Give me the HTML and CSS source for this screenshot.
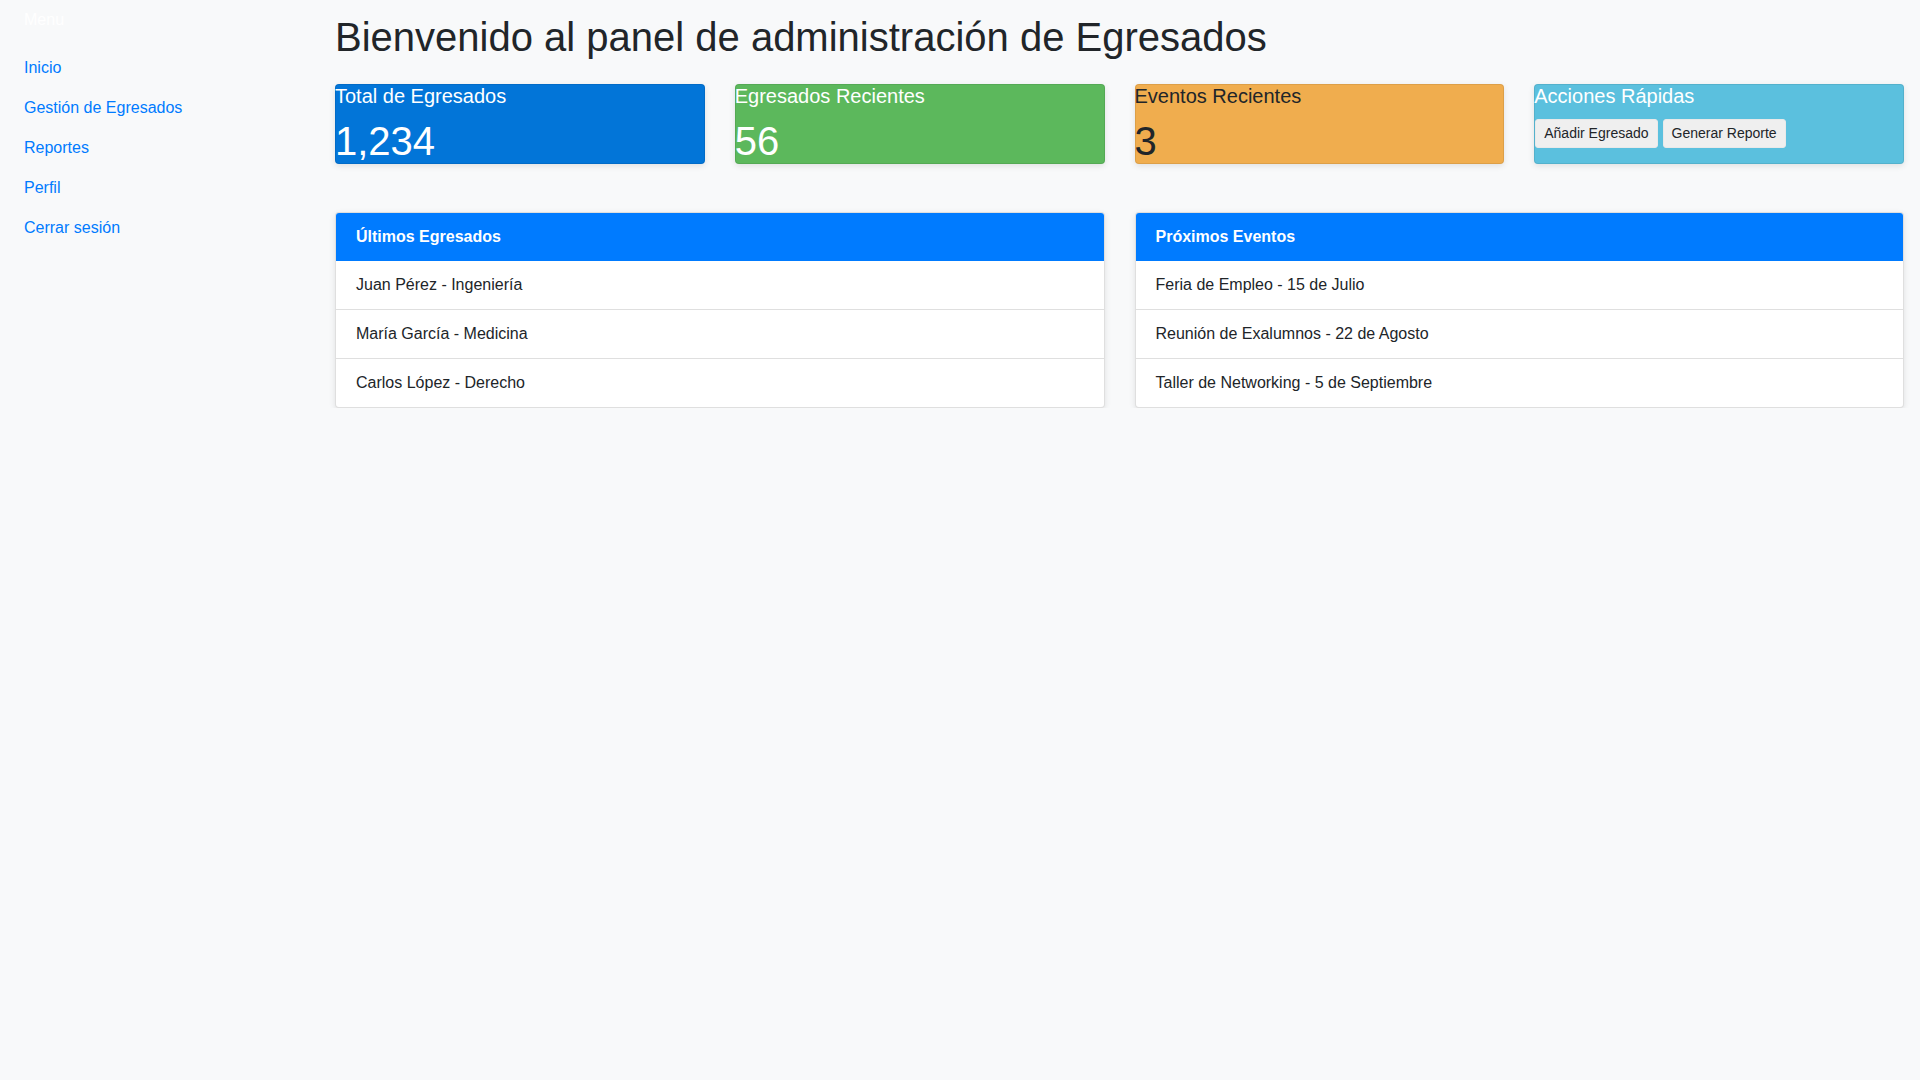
FILE: index.html
```html
<!DOCTYPE html>
<html lang="es">
<head>
    <meta charset="UTF-8">
    <meta name="viewport" content="width=device-width, initial-scale=1.0">
    <title>Panel de administración de Egresados</title>
    <link rel="stylesheet" href="styles.css">
</head>
<body>
    <div class="layout">
        <nav class="sidebar">
            <h2 class="sidebar-title">Menu</h2>
            <ul class="nav">
                <li><a class="nav-link" href="#">Inicio</a></li>
                <li><a class="nav-link" href="#">Gestión de Egresados</a></li>
                <li><a class="nav-link" href="#">Reportes</a></li>
                <li><a class="nav-link" href="#">Perfil</a></li>
                <li><a class="nav-link" href="#">Cerrar sesión</a></li>
            </ul>
        </nav>

        <main class="main">
            <h1>Bienvenido al panel de administración de Egresados</h1>

            <div class="stats-row">
                <div class="stat-card bg-primary">
                    <h5 class="stat-title">Total de Egresados</h5>
                    <p class="stat-value">1,234</p>
                </div>
                <div class="stat-card bg-success">
                    <h5 class="stat-title">Egresados Recientes</h5>
                    <p class="stat-value">56</p>
                </div>
                <div class="stat-card bg-warning">
                    <h5 class="stat-title">Eventos Recientes</h5>
                    <p class="stat-value">3</p>
                </div>
                <div class="stat-card bg-info">
                    <h5 class="stat-title">Acciones Rápidas</h5>
                    <div class="actions">
                        <button class="btn">Añadir Egresado</button>
                        <button class="btn">Generar Reporte</button>
                    </div>
                </div>
            </div>

            <div class="lists-row">
                <div class="list-card">
                    <div class="list-header">Últimos Egresados</div>
                    <ul class="list-group">
                        <li class="list-item">Juan Pérez - Ingeniería</li>
                        <li class="list-item">María García - Medicina</li>
                        <li class="list-item">Carlos López - Derecho</li>
                    </ul>
                </div>
                <div class="list-card">
                    <div class="list-header">Próximos Eventos</div>
                    <ul class="list-group">
                        <li class="list-item">Feria de Empleo - 15 de Julio</li>
                        <li class="list-item">Reunión de Exalumnos - 22 de Agosto</li>
                        <li class="list-item">Taller de Networking - 5 de Septiembre</li>
                    </ul>
                </div>
            </div>
        </main>
    </div>
</body>
</html>
```

FILE: styles.css
```css
* {
    box-sizing: border-box;
}

body {
    font-family: 'Liberation Sans', Arial, Helvetica, sans-serif;
    font-size: 16px;
    line-height: 1.5;
    background-color: #f8f9fa;
    color: #212529;
    margin: 0;
}

.layout {
    display: flex;
}

/* sidebar */
.sidebar {
    width: 320px;
    flex-shrink: 0;
    padding: 8px;
}

.sidebar-title {
    font-size: 16px;
    font-weight: normal;
    line-height: 24px;
    color: #fff;
    margin: 0 0 16px;
    padding: 0 16px;
}

.nav {
    list-style: none;
    margin: 0;
    padding: 0;
}

.nav-link {
    display: block;
    padding: 8px 16px;
    color: #007bff;
    text-decoration: none;
}

/* main */
.main {
    flex: 1;
    padding: 0 16px 0 15px;
}

h1 {
    font-size: 40px;
    font-weight: 500;
    line-height: 48px;
    margin: 13px 0 0;
}

.stats-row {
    display: grid;
    grid-template-columns: repeat(4, 1fr);
    gap: 30px;
    margin-top: 23px;
}

.stat-card {
    height: 80px;
    border: 1px solid rgba(0, 0, 0, 0.08);
    border-radius: 4px;
    box-shadow: 0 2px 6px rgba(0, 0, 0, 0.1);
    color: #fff;
}

.stat-title {
    font-size: 20px;
    font-weight: 500;
    line-height: 24px;
    margin: -1px 0 8px -1px;
}

.stat-value {
    font-size: 40px;
    line-height: 48px;
    margin: 9px 0 0 -1px;
}

.bg-primary { background-color: #0275d8; }
.bg-success { background-color: #5cb85c; }
.bg-warning { background-color: #f0ad4e; color: #212529; }
.bg-info { background-color: #5bc0de; }

.actions {
    display: flex;
    gap: 5px;
    margin-top: 11px;
}

.btn {
    font-family: inherit;
    font-size: 14px;
    line-height: 19px;
    padding: 4px 8px;
    color: #212529;
    background-color: #efefef;
    border: 1px solid #e9e9e9;
    border-radius: 3px;
}

.lists-row {
    display: grid;
    grid-template-columns: repeat(2, 1fr);
    gap: 30px;
    margin-top: 48px;
}

.list-card {
    background-color: #fff;
    border: 1px solid rgba(0, 0, 0, 0.125);
    border-radius: 4px;
    box-shadow: 0 2px 6px rgba(0, 0, 0, 0.1);
    overflow: hidden;
}

.list-header {
    background-color: #007bff;
    color: #fff;
    font-weight: bold;
    padding: 12px 20px;
}

.list-group {
    list-style: none;
    margin: 0;
    padding: 0;
}

.list-item {
    padding: 12px 20px;
    border-top: 1px solid rgba(0, 0, 0, 0.125);
}

.list-item:first-child {
    border-top: none;
}
```
